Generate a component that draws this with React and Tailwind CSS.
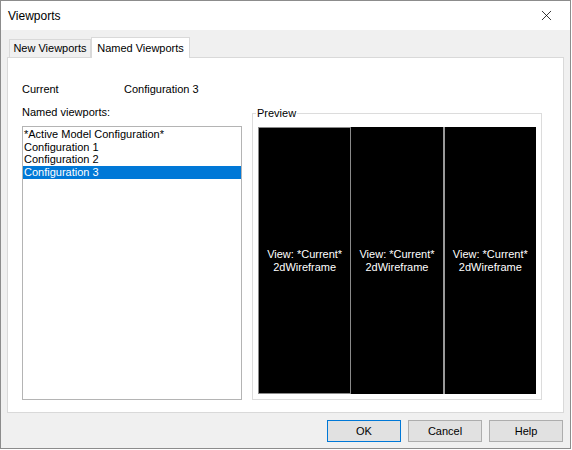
import { X } from 'lucide-react';

const ITEMS = ['*Active Model Configuration*', 'Configuration 1', 'Configuration 2', 'Configuration 3'];
const SELECTED = 'Configuration 3';

const Pane = ({ className }) => (
  <div className={`flex-1 flex flex-col items-center justify-center text-white text-[11px] leading-[13px] ${className}`}>
    <span>View: *Current*</span>
    <span>2dWireframe</span>
  </div>
);

const DialogButton = ({ children, primary }) => (
  <button
    className={`w-[74px] h-[22px] bg-[#e1e1e1] text-[11px] text-black border ${primary ? 'border-[#0078d7]' : 'border-[#adadad]'}`}>
    {children}
  </button>
);

const App = () => {
  return (
    <div className="w-[572px] h-[450px] bg-white" style={{ fontFamily: '"Liberation Sans", Arial, sans-serif' }}>
      <div className="w-[571px] h-[449px] border border-[#8c8c8c] bg-[#f0f0f0] flex flex-col">
        {/* title bar */}
        <div className="h-[29px] bg-white flex items-center justify-between pl-[7px] pr-[15px]">
          <span className="text-[12px] text-black">Viewports</span>
          <X size={17} strokeWidth={1.1} className="text-black" />
        </div>

        <div className="px-[6px] pt-[7px] flex flex-col">
          {/* tabs */}
          <div className="flex items-end h-[20px] text-[11px] text-black pl-[2px]">
            <div className="h-[18px] w-[82px] flex items-center justify-center bg-[#f0f0f0] border border-b-0 border-[#d9d9d9]">New Viewports</div>
            <div className="h-[21px] w-[99px] flex items-center justify-center bg-white border border-b-0 border-[#d9d9d9] -mb-[1px] relative">Named Viewports</div>
          </div>

          {/* tab panel */}
          <div className="h-[356px] bg-white border border-[#d9d9d9] pl-[14px] pt-[24px] text-[11px] text-black">
            <div className="flex h-[14px] leading-[14px]">
              <span className="w-[102px]">Current</span>
              <span>Configuration 3</span>
            </div>

            <div className="flex mt-[9px]">
              <div className="w-[220px] flex flex-col">
                <span className="h-[14px] leading-[14px]">Named viewports:</span>
                <div className="mt-[7px] h-[274px] border border-[#b4b4b4] pt-[1px]">
                  {ITEMS.map(item => (
                    <div key={item}
                      className={`h-[12.7px] leading-[13px] pl-[1px] ${item === SELECTED ? 'bg-[#0078d7] text-white' : ''}`}>
                      {item}
                    </div>
                  ))}
                </div>
              </div>

              <div className="ml-[10px] mt-[8px] w-[290px] h-[287px] border border-[#dcdcdc] relative px-[5px] pt-[13px] pb-[5px]">
                <span className="absolute left-[3px] -top-[8px] bg-white px-[1px] leading-[14px]">Preview</span>
                <div className="h-full w-[278px] bg-black flex">
                  <Pane className="border border-[#8a8a8a]" />
                  <Pane className="border-r-2 border-[#9a9a9a]" />
                  <Pane />
                </div>
              </div>
            </div>
          </div>

          {/* buttons */}
          <div className="flex justify-end gap-[7px] mt-[7px] pr-[1px]">
            <DialogButton primary>OK</DialogButton>
            <DialogButton>Cancel</DialogButton>
            <DialogButton>Help</DialogButton>
          </div>
        </div>
      </div>
    </div>
  );
};

export default App;
